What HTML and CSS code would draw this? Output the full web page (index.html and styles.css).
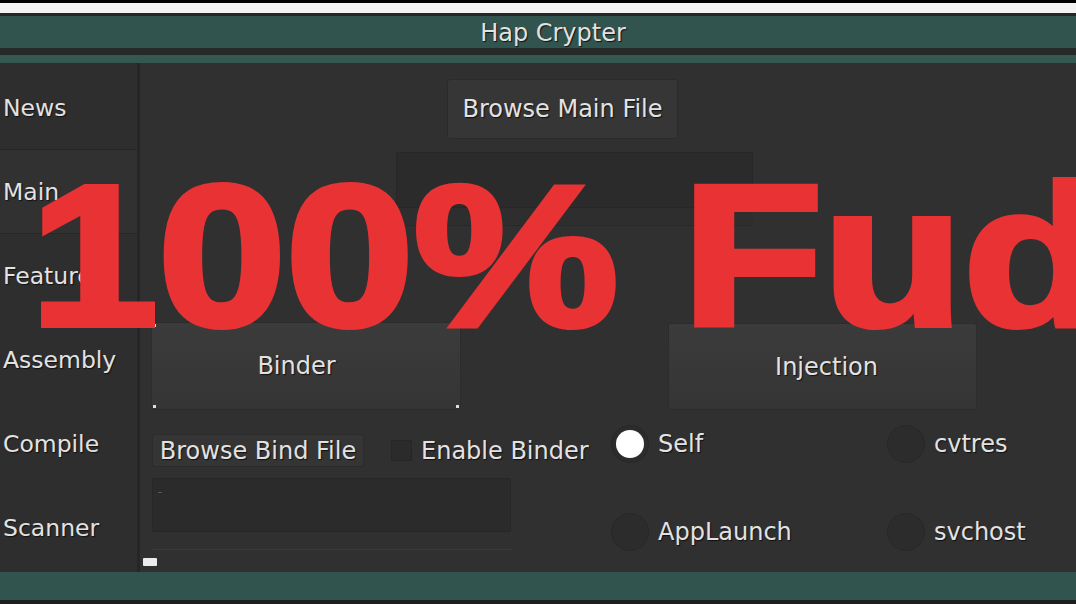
FILE: index.html
```html
<!DOCTYPE html>
<html lang="en">
<head>
  <meta charset="UTF-8" />
  <title>Hap Crypter</title>
  <link rel="stylesheet" href="styles.css">
</head>
<body>
  <div class="window">
    <div class="edge-black"></div>
    <div class="edge-white"></div>
    <div class="edge-dark"></div>
    <header class="titlebar">Hap Crypter</header>
    <div class="title-sep"></div>
    <div class="tabstrip"></div>

    <div class="content">
      <nav class="sidebar">
        <div class="tab first">News</div>
        <div class="tab active">Main</div>
        <div class="tab">Features</div>
        <div class="tab">Assembly</div>
        <div class="tab">Compile</div>
        <div class="tab">Scanner</div>
      </nav>

      <main class="main">
        <button class="btn btn-browse-main">Browse Main File</button>
        <div class="textbox path-main"></div>
        <div class="path-strip"></div>

        <div class="lower">
          <div class="left-col">
            <button class="btn btn-big btn-binder">Binder</button>
            <div class="bind-row">
              <button class="btn btn-bind">Browse Bind File</button>
              <span class="checkbox"></span>
              <span class="label">Enable Binder</span>
            </div>
            <div class="textbox path-bind"><span class="caret"></span></div>
            <div class="bind-line"></div>
          </div>

          <div class="right-col">
            <button class="btn btn-big btn-injection">Injection</button>
            <div class="radios">
              <div class="radio checked"><span class="dot"></span><span class="label">Self</span></div>
              <div class="radio"><span class="dot"></span><span class="label">cvtres</span></div>
              <div class="radio"><span class="dot"></span><span class="label">AppLaunch</span></div>
              <div class="radio"><span class="dot"></span><span class="label">svchost</span></div>
            </div>
          </div>
        </div>

        <div class="grip"></div>
      </main>
    </div>

    <footer class="statusbar"></footer>
    <div class="edge-bottom"></div>

    <div class="overlay">100% Fud</div>
  </div>
</body>
</html>
```

FILE: styles.css
```css
body {
    margin: 0;
    background-color: #1b1b1b;
    font-family: "DejaVu Sans", Verdana, sans-serif;
    overflow: hidden;
}

.window {
    position: relative;
    width: 1076px;
    height: 604px;
    overflow: hidden;
    background-color: #303030;
    color: #e2e2e2;
    font-size: 24px;
    text-shadow: 1px 1px 1px #111;
}

.edge-black {
    height: 3px;
    background-color: #000;
}

.edge-white {
    height: 10px;
    background-color: #f3f3f3;
}

.edge-dark {
    height: 3px;
    background-color: #262626;
}

.titlebar {
    height: 32px;
    line-height: 34px;
    background-color: #32544f;
    text-align: center;
    padding-left: 30px;
    font-size: 24px;
}

.title-sep {
    height: 7px;
    background-color: #252a29;
}

.tabstrip {
    height: 8px;
    background-color: #36594f;
}

.content {
    display: flex;
    height: 509px;
}

.sidebar {
    flex-shrink: 0;
    width: 137px;
    border-right: 3px solid #262626;
    background-color: #2e2e2e;
    padding-top: 3px;
}

.tab {
    height: 84px;
    display: flex;
    align-items: center;
    padding-left: 3px;
    font-size: 23.5px;
    white-space: nowrap;
    box-sizing: border-box;
}

.tab.first {
    border-bottom: 1px solid #272727;
}

.tab.active {
    background-color: #313131;
    border-bottom: 1px solid #272727;
}

.main {
    flex: 1;
    padding-top: 16px;
    overflow: hidden;
    background-color: #303030;
}

.btn {
    display: block;
    font-family: inherit;
    font-size: 24px;
    color: #e2e2e2;
    text-shadow: 1px 1px 1px #111;
    background-color: #363636;
    border: 1px solid #2b2b2b;
    border-radius: 3px;
    padding: 0;
    white-space: nowrap;
    box-sizing: border-box;
}

.btn-browse-main {
    margin-left: 307px;
    width: 231px;
    height: 60px;
}

.textbox {
    background-color: #2b2b2b;
    border: 1px solid #272727;
    border-radius: 2px;
    box-sizing: border-box;
}

.path-main {
    margin: 13px 0 0 256px;
    width: 357px;
    height: 56px;
}

.path-strip {
    margin-left: 256px;
    width: 357px;
    height: 18px;
    background-color: #2e2e2e;
    border-bottom: 1px solid #282828;
    box-sizing: border-box;
}

.lower {
    display: flex;
    margin-top: 96px;
}

.left-col {
    flex-shrink: 0;
    margin-left: 11px;
    width: 454px;
}

.right-col {
    flex: 1;
    min-width: 0;
}

.btn-big {
    background-color: #383838;
    background-image: linear-gradient(#3b3b3b, #353535);
    border-color: #2c2c2c;
}

.btn-binder {
    width: 310px;
    height: 88px;
    padding-right: 19px;
    background-image:
        radial-gradient(circle, #ddd 1.5px, transparent 2px),
        radial-gradient(circle, #ddd 1.5px, transparent 2px),
        radial-gradient(circle, #ddd 1.5px, transparent 2px),
        radial-gradient(circle, #ddd 1.5px, transparent 2px),
        linear-gradient(#3b3b3b, #353535);
    background-size: 5px 5px, 5px 5px, 5px 5px, 5px 5px, 100% 100%;
    background-position: left top, right top, left bottom, right bottom, 0 0;
    background-repeat: no-repeat;
}

.bind-row {
    display: flex;
    align-items: center;
    margin-top: 24px;
    white-space: nowrap;
}

.btn-bind {
    flex-shrink: 0;
    margin-left: 1px;
    width: 212px;
    height: 33px;
    background-color: #353535;
}

.checkbox {
    flex-shrink: 0;
    margin-left: 27px;
    width: 21px;
    height: 21px;
    background-color: #2b2b2b;
    border: 1px solid #262626;
    box-sizing: border-box;
}

.bind-row .label {
    margin-left: 9px;
}

.path-bind {
    margin: 11px 0 0 1px;
    width: 359px;
    height: 54px;
}

.caret {
    display: block;
    margin: 13px 0 0 5px;
    width: 4px;
    height: 1px;
    background-color: #555;
}

.bind-line {
    margin-top: 17px;
    width: 361px;
    height: 1px;
    background-color: #3a3a3a;
}

.btn-injection {
    margin: 1px 0 0 63px;
    width: 309px;
    height: 87px;
    padding-left: 8px;
}

.radios {
    display: grid;
    grid-template-columns: 276px 276px;
    row-gap: 48px;
    margin: 14px 0 0 5px;
}

.radio {
    display: flex;
    align-items: center;
    height: 40px;
    white-space: nowrap;
}

.dot {
    flex-shrink: 0;
    width: 38px;
    height: 38px;
    margin-left: 1px;
    border-radius: 50%;
    background-color: #2c2c2c;
    border: 1px solid #282828;
    box-sizing: border-box;
    display: flex;
    align-items: center;
    justify-content: center;
}

.radio.checked .dot::after {
    content: "";
    width: 28px;
    height: 28px;
    border-radius: 50%;
    background-color: #fff;
}

.radio .label {
    margin-left: 9px;
}

.grip {
    margin: 6px 0 0 3px;
    width: 14px;
    height: 8px;
    background-color: #ececec;
    border-radius: 1px;
}

.statusbar {
    height: 28px;
    background-color: #32544f;
}

.edge-bottom {
    height: 4px;
    background-color: #1e1e1e;
}

.overlay {
    position: absolute;
    left: 30px;
    top: 156px;
    font-family: "Liberation Sans", Arial, sans-serif;
    font-weight: bold;
    font-size: 200px;
    line-height: 1;
    color: #e93233;
    white-space: nowrap;
    text-shadow: none;
    -webkit-text-stroke: 6px #e93233;
    transform: scaleX(1.15);
    transform-origin: left top;
    pointer-events: none;
}
```
